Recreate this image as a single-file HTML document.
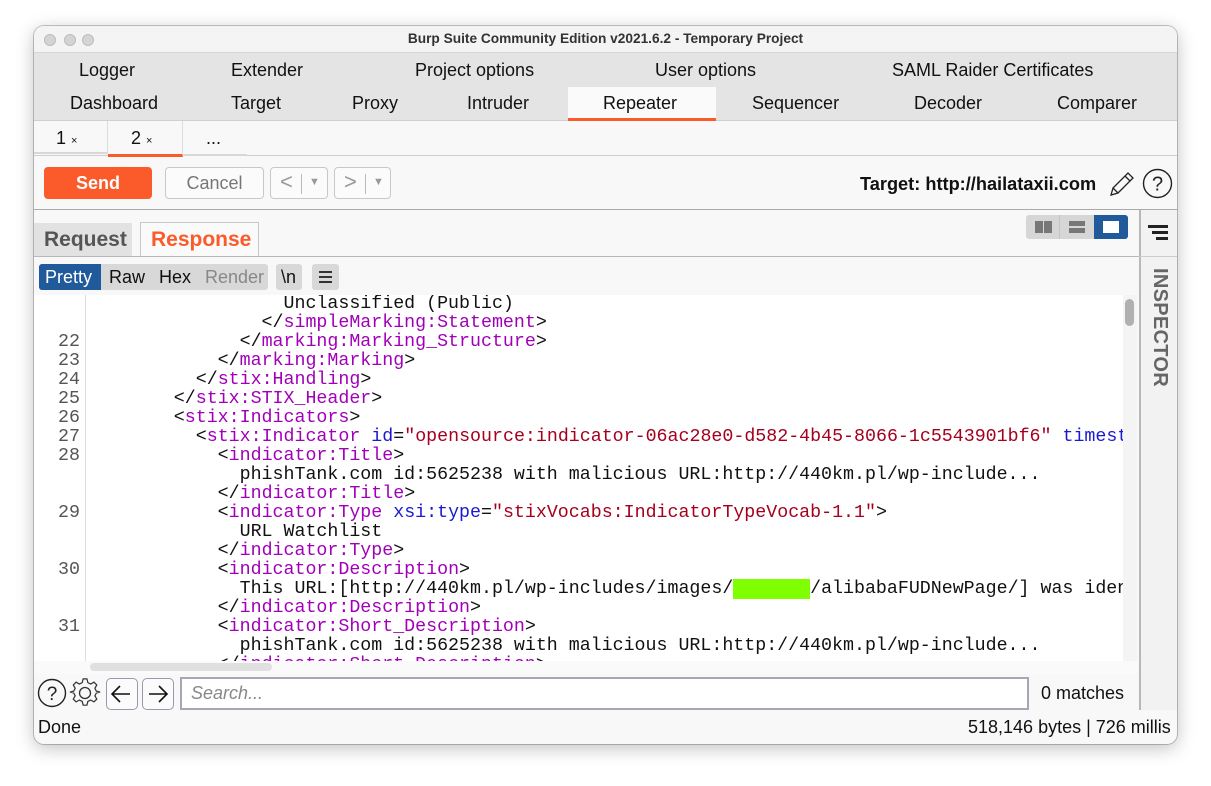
<!DOCTYPE html>
<html><head><meta charset="utf-8"><style>
*{margin:0;padding:0;box-sizing:border-box}
body{width:1211px;height:786px;background:#fff;position:relative;overflow:hidden;font-family:"Liberation Sans",sans-serif;color:#111}
.abs{position:absolute}
#win{position:absolute;left:34px;top:26px;width:1143px;height:718px;border-radius:10px;background:#f8f8f8;box-shadow:0 4px 18px rgba(0,0,0,.25),0 0 0 1px #c9c9c9;overflow:hidden}
.t{position:absolute;font-size:18px;white-space:nowrap}
.code{position:absolute;left:0;top:0;font-family:"Liberation Mono",monospace;font-size:18.3px;line-height:19px;white-space:pre;color:#111}
.g{color:#a100b8}.b{color:#1a1ad0}.r{color:#a5001e}
.ln{position:absolute;left:0;width:46px;text-align:right;font-family:"Liberation Mono",monospace;font-size:18.3px;line-height:19px;color:#555;white-space:pre}
.btn{position:absolute;border:1px solid #c8c8c8;border-radius:4px;background:#fbfbfb}
</style></head><body>
<div id="win">
 <div class="abs" style="left:0;top:0;width:1143px;height:27px;background:#f4f4f4;border-bottom:1px solid #d6d6d6"></div>
 <div class="abs" style="left:10px;top:8px;width:12px;height:12px;border-radius:50%;background:#d4d4d4;border:1px solid #bdbdbd"></div>
 <div class="abs" style="left:30px;top:8px;width:12px;height:12px;border-radius:50%;background:#d4d4d4;border:1px solid #bdbdbd"></div>
 <div class="abs" style="left:48px;top:8px;width:12px;height:12px;border-radius:50%;background:#d4d4d4;border:1px solid #bdbdbd"></div>
 <div class="t" style="left:0;width:1143px;text-align:center;top:5px;font-size:13.7px;font-weight:bold;color:#333">Burp Suite Community Edition v2021.6.2 - Temporary Project</div>
 <div class="abs" style="left:0;top:27px;width:1143px;height:68px;background:#e4e4e4;border-bottom:1px solid #cfcfcf"></div>
 <div class="abs" style="left:534px;top:61px;width:148px;height:34px;background:#fafafa;border-bottom:3px solid #fb5b2b"></div>
 <div class="t" style="left:45px;top:34px">Logger</div>
 <div class="t" style="left:197px;top:34px">Extender</div>
 <div class="t" style="left:381px;top:34px">Project options</div>
 <div class="t" style="left:621px;top:34px">User options</div>
 <div class="t" style="left:858px;top:34px">SAML Raider Certificates</div>
 <div class="t" style="left:36px;top:67px">Dashboard</div>
 <div class="t" style="left:197px;top:67px">Target</div>
 <div class="t" style="left:318px;top:67px">Proxy</div>
 <div class="t" style="left:433px;top:67px">Intruder</div>
 <div class="t" style="left:569px;top:67px">Repeater</div>
 <div class="t" style="left:718px;top:67px">Sequencer</div>
 <div class="t" style="left:880px;top:67px">Decoder</div>
 <div class="t" style="left:1023px;top:67px">Comparer</div>
 <div class="abs" style="left:0;top:95px;width:1143px;height:35px;background:#f8f8f8;border-bottom:1px solid #d0d0d0"></div>
 <div class="abs" style="left:0;top:95px;width:74px;height:33px;border-right:1px solid #ddd;border-bottom:2px solid #d8d8d8"></div>
 <div class="abs" style="left:74px;top:95px;width:75px;height:36px;border-right:1px solid #ddd;border-bottom:3px solid #fb5b2b"></div>
 <div class="abs" style="left:149px;top:128px;width:64px;height:2px;background:#d8d8d8"></div>
 <div class="t" style="left:22px;top:102px">1 <span style="font-size:11px">×</span></div>
 <div class="t" style="left:97px;top:102px">2 <span style="font-size:11px">×</span></div>
 <div class="t" style="left:172px;top:102px">...</div>
 <div class="abs" style="left:10px;top:141px;width:108px;height:32px;border-radius:4px;background:#fb5b2b;color:#fff;font-weight:bold;font-size:18px;text-align:center;line-height:32px">Send</div>
 <div class="btn" style="left:131px;top:141px;width:99px;height:32px;color:#777;font-size:18px;text-align:center;line-height:30px">Cancel</div>
 <div class="btn" style="left:236px;top:141px;width:58px;height:32px;color:#999;font-size:22px;line-height:28px;padding-left:9px">&lt;<span style="position:absolute;left:30px;top:6px;width:1px;height:20px;background:#bbb"></span><span style="position:absolute;left:38px;top:0;font-size:11px">▼</span></div>
 <div class="btn" style="left:300px;top:141px;width:57px;height:32px;color:#999;font-size:22px;line-height:28px;padding-left:9px">&gt;<span style="position:absolute;left:30px;top:6px;width:1px;height:20px;background:#bbb"></span><span style="position:absolute;left:38px;top:0;font-size:11px">▼</span></div>
 <div class="t" style="left:826px;top:148px;font-weight:bold;font-size:18.2px">Target: http://hailataxii.com</div>
 <svg class="abs" style="left:1074px;top:144px" width="28" height="28" viewBox="0 0 28 28"><path d="M3 25 L5 18 L20 3 L25 8 L10 23 Z M5 18 L10 23 M17 6 L22 11" fill="none" stroke="#222" stroke-width="1.3"/></svg>
 <svg class="abs" style="left:1108px;top:142px" width="31" height="31" viewBox="0 0 31 31"><circle cx="15.5" cy="15.5" r="14" fill="none" stroke="#222" stroke-width="1.4"/><text x="15.5" y="22.5" text-anchor="middle" font-family="Liberation Sans" font-size="20" fill="#222">?</text></svg>
 <div class="abs" style="left:0;top:183px;width:1143px;height:1px;background:#aaa"></div>
 <div class="abs" style="left:1105px;top:184px;width:38px;height:500px;background:#f2f2f2;border-left:2px solid #b8b8b8"></div>
 <div class="abs" style="left:1105px;top:230px;width:38px;height:1px;background:#ccc"></div>
 <div class="abs" style="left:1114px;top:199px;width:20px;height:3px;background:#222"></div>
 <div class="abs" style="left:1118px;top:205px;width:16px;height:3px;background:#222"></div>
 <div class="abs" style="left:1122px;top:211px;width:12px;height:3px;background:#222"></div>
 <div class="abs" style="left:1111px;top:242px;width:26px;height:130px;writing-mode:vertical-rl;font-weight:bold;font-size:20px;color:#666;letter-spacing:.3px">INSPECTOR</div>
 <div class="abs" style="left:992px;top:189px;width:102px;height:24px;border-radius:3px;background:#d6d6d6"></div>
 <div class="abs" style="left:1001px;top:195px;width:8px;height:12px;background:#777"></div>
 <div class="abs" style="left:1010px;top:195px;width:8px;height:12px;background:#777"></div>
 <div class="abs" style="left:1025px;top:189px;width:1px;height:24px;background:#c4c4c4"></div>
 <div class="abs" style="left:1035px;top:195px;width:16px;height:5px;background:#777"></div>
 <div class="abs" style="left:1035px;top:202px;width:16px;height:5px;background:#777"></div>
 <div class="abs" style="left:1060px;top:189px;width:34px;height:24px;border-radius:0 3px 3px 0;background:#215a9a"></div>
 <div class="abs" style="left:1069px;top:195px;width:16px;height:12px;background:#fff"></div>
 <div class="abs" style="left:0;top:197px;width:98px;height:33px;background:#e2e2e2"></div>
 <div class="t" style="left:10px;top:202px;font-size:21px;font-weight:bold;color:#555">Request</div>
 <div class="abs" style="left:106px;top:196px;width:119px;height:35px;background:#fafafa;border:1px solid #c8c8c8;border-bottom:none"></div>
 <div class="t" style="left:117px;top:202px;font-size:21px;font-weight:bold;color:#fb5b2b">Response</div>
 <div class="abs" style="left:0;top:230px;width:1105px;height:1px;background:#b8b8b8"></div>
 <div class="abs" style="left:5px;top:238px;width:229px;height:26px;background:#d8d8d8;border-radius:3px"></div>
 <div class="abs" style="left:5px;top:238px;width:62px;height:26px;background:#215a9a;border-radius:3px 0 0 3px"></div>
 <div class="t" style="left:11px;top:241px;color:#fff">Pretty</div>
 <div class="t" style="left:75px;top:241px">Raw</div>
 <div class="t" style="left:125px;top:241px">Hex</div>
 <div class="t" style="left:171px;top:241px;color:#888">Render</div>
 <div class="abs" style="left:242px;top:238px;width:26px;height:26px;background:#d8d8d8;border-radius:3px"></div>
 <div class="t" style="left:247px;top:241px">\n</div>
 <div class="abs" style="left:278px;top:238px;width:27px;height:26px;background:#d8d8d8;border-radius:3px"></div>
 <div class="abs" style="left:285px;top:245px;width:13px;height:2px;background:#333;box-shadow:0 5px 0 #333,0 10px 0 #333"></div>
 <div class="abs" style="left:0;top:269px;width:1103px;height:366px;background:#fff;overflow:hidden">
  <div class="abs" style="left:51px;top:0;width:1px;height:366px;background:#ddd"></div>
  <div class="ln" style="top:0"> 
 
22
23
24
25
26
27
28
 
 
29
 
 
30
 
 
31</div>
  <div class="code" style="left:63px;top:0"><span>                 Unclassified (Public)
               &lt;/<span class="g">simpleMarking:Statement</span>&gt;
             &lt;/<span class="g">marking:Marking_Structure</span>&gt;
           &lt;/<span class="g">marking:Marking</span>&gt;
         &lt;/<span class="g">stix:Handling</span>&gt;
       &lt;/<span class="g">stix:STIX_Header</span>&gt;
       &lt;<span class="g">stix:Indicators</span>&gt;
         &lt;<span class="g">stix:Indicator</span> <span class="b">id</span>=<span class="r">"opensource:indicator-06ac28e0-d582-4b45-8066-1c5543901bf6"</span> <span class="b">timestamp</span>
           &lt;<span class="g">indicator:Title</span>&gt;
             phishTank.com id:5625238 with malicious URL:http://440km.pl/wp-include...
           &lt;/<span class="g">indicator:Title</span>&gt;
           &lt;<span class="g">indicator:Type</span> <span class="b">xsi:type</span>=<span class="r">"stixVocabs:IndicatorTypeVocab-1.1"</span>&gt;
             URL Watchlist
           &lt;/<span class="g">indicator:Type</span>&gt;
           &lt;<span class="g">indicator:Description</span>&gt;
             This URL:[http://440km.pl/wp-includes/images/<span style="background:#7fff00;color:#7fff00">xxxxxxx</span>/alibabaFUDNewPage/] was identified
           &lt;/<span class="g">indicator:Description</span>&gt;
           &lt;<span class="g">indicator:Short_Description</span>&gt;
             phishTank.com id:5625238 with malicious URL:http://440km.pl/wp-include...
           &lt;/<span class="g">indicator:Short_Description</span>&gt;</span></div>
  <div class="abs" style="left:1089px;top:0;width:14px;height:366px;background:#f4f4f4"></div>
  <div class="abs" style="left:1091px;top:4px;width:9px;height:27px;border-radius:5px;background:#b0b0b0"></div>
 </div>
 <div class="abs" style="left:0;top:635px;width:1103px;height:13px;background:#fafafa"></div>
 <div class="abs" style="left:56px;top:637px;width:182px;height:8px;border-radius:4px;background:#e0e0e0"></div>
 <svg class="abs" style="left:3px;top:652px" width="30" height="30" viewBox="0 0 30 30"><circle cx="15" cy="15" r="13.5" fill="none" stroke="#222" stroke-width="1.4"/><text x="15" y="22" text-anchor="middle" font-family="Liberation Sans" font-size="19" fill="#222">?</text></svg>
 <svg class="abs" style="left:35px;top:651px" width="32" height="32" viewBox="0 0 32 32"><path d="M14 2h4l1 4 3 1.5 3.5-2 3 3-2 3.5L28 15l4 1v0l-4 1-1.5 3 2 3.5-3 3-3.5-2L19 26l-1 4h-4l-1-4-3-1.5-3.5 2-3-3 2-3.5L4 17l-4-1 4-1 1.5-3-2-3.5 3-3 3.5 2L13 6z" fill="none" stroke="#333" stroke-width="1.3" transform="translate(1 0) scale(.94)"/><circle cx="16" cy="16" r="5.5" fill="none" stroke="#333" stroke-width="1.3"/></svg>
 <div class="btn" style="left:72px;top:652px;width:32px;height:32px;border-color:#9a98aa;border-radius:5px"></div>
 <svg class="abs" style="left:74px;top:656px" width="28" height="24" viewBox="0 0 28 24"><path d="M22 12H5M12 4l-8 8 8 8" fill="none" stroke="#111" stroke-width="1.6"/></svg>
 <div class="btn" style="left:108px;top:652px;width:32px;height:32px;border-color:#9a98aa;border-radius:5px"></div>
 <svg class="abs" style="left:110px;top:656px" width="28" height="24" viewBox="0 0 28 24"><path d="M5 12H22M15 4l8 8-8 8" fill="none" stroke="#111" stroke-width="1.6"/></svg>
 <div class="abs" style="left:146px;top:651px;width:849px;height:33px;background:#fff;border:2px solid #a8a6b4"></div>
 <div class="t" style="left:157px;top:657px;font-style:italic;color:#888">Search...</div>
 <div class="t" style="left:1007px;top:657px">0 matches</div>
 <div class="t" style="left:4px;top:691px">Done</div>
 <div class="t" style="left:934px;top:691px">518,146 bytes | 726 millis</div>
</div>
</body></html>
